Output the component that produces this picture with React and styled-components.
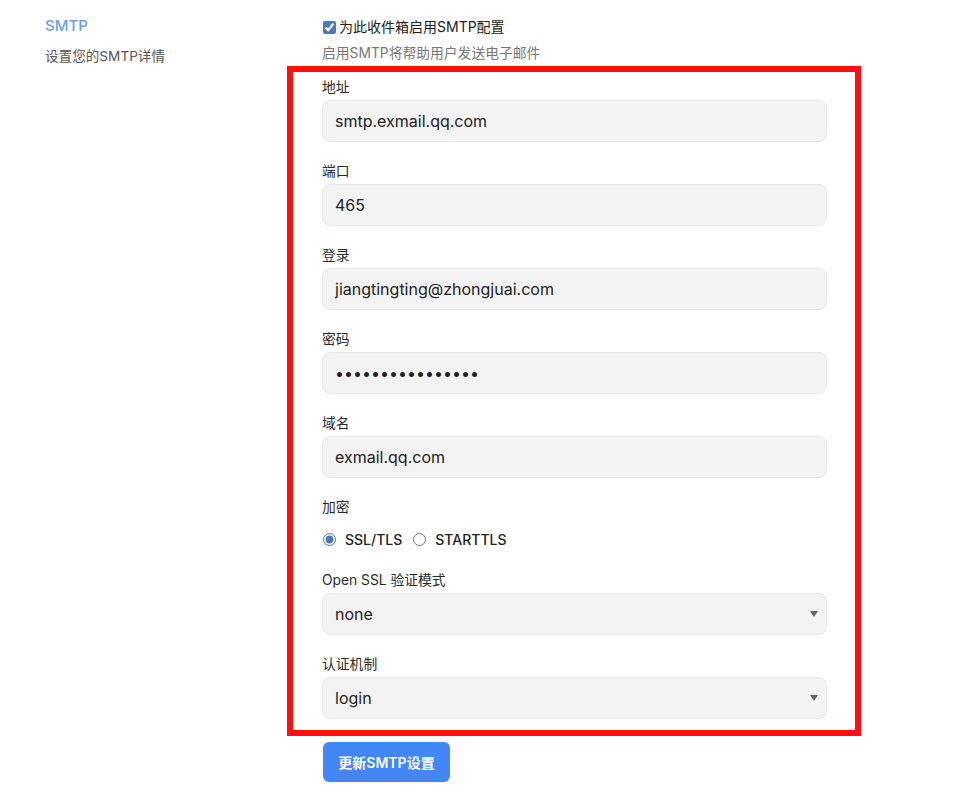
import React from "react";
import styled, { createGlobalStyle } from "styled-components";

const GlobalStyle = createGlobalStyle`
  html, body {
    margin: 0;
    background: #ffffff;
  }
  body {
    font-family: Inter, "Noto Sans CJK SC", sans-serif;
    color: #222;
  }
`;

const Page = styled.div`
  display: grid;
  grid-template-columns: 277px 505px;
  padding: 14px 0 0 45px;
`;

const Aside = styled.div`
  display: flex;
  flex-direction: column;
`;

const Title = styled.div`
  font-size: 15px;
  line-height: 24px;
  color: #6b9ef0;
  font-weight: 500;
`;

const Subtitle = styled.div`
  margin-top: 8px;
  font-size: 13.6px;
  line-height: 20px;
  color: #555;
`;

const Main = styled.div`
  display: flex;
  flex-direction: column;
`;

const CheckRow = styled.label`
  display: flex;
  align-items: center;
  gap: 3px;
  margin-top: 2px;
  font-size: 14px;
  line-height: 22px;
  color: #222;

  input {
    margin: 0 0 0 1px;
    width: 13px;
    height: 13px;
    accent-color: #4f79b0;
  }
`;

const Help = styled.div`
  margin-top: 6px;
  font-size: 13.8px;
  line-height: 18px;
  color: #777;
`;

const Frame = styled.div`
  display: flex;
  flex-direction: column;
  gap: 20px;
  margin: 4px -34px 0 -35px;
  padding: 6px 28px 11px 29px;
  border: 6px solid #ff1010;
`;

const Field = styled.div`
  display: flex;
  flex-direction: column;
`;

const Label = styled.div`
  font-size: 13.8px;
  line-height: 18px;
  color: #2a2a2a;
  margin-bottom: ${(p) => (p.$wide ? "13px" : "4px")};
`;

const Input = styled.input`
  box-sizing: border-box;
  width: 100%;
  height: 42px;
  padding: 0 12px;
  background: #f3f3f3;
  border: 1px solid #e8e8e8;
  border-radius: 8px;
  font-family: Inter, "Noto Sans CJK SC", sans-serif;
  font-size: 16px;
  color: #222;
  outline: none;
`;

const SelectWrap = styled.div`
  position: relative;

  &::after {
    content: "";
    position: absolute;
    right: 9px;
    top: 18px;
    border-left: 4px solid transparent;
    border-right: 4px solid transparent;
    border-top: 6px solid #666;
    pointer-events: none;
  }
`;

const Select = styled.select`
  box-sizing: border-box;
  width: 100%;
  height: 42px;
  padding: 0 12px;
  background: #f3f3f3;
  border: 1px solid #e8e8e8;
  border-radius: 8px;
  font-family: Inter, "Noto Sans CJK SC", sans-serif;
  font-size: 16px;
  color: #222;
  appearance: none;
  outline: none;
`;

const RadioRow = styled.div`
  display: flex;
  align-items: center;
  height: 20px;
  margin-bottom: 2px;
`;

const Radio = styled.label`
  display: flex;
  align-items: center;
  gap: 9px;
  margin-right: 10px;
  font-size: 14px;
  font-weight: 500;
  color: #222;

  input {
    margin: 0 0 0 1px;
    width: 13px;
    height: 13px;
    accent-color: #4f79b0;
  }
`;

const Button = styled.button`
  align-self: flex-start;
  margin: 6px 0 0 1px;
  width: 127px;
  height: 40px;
  border: none;
  border-radius: 6px;
  background: #4287f5;
  color: #fff;
  font-family: Inter, "Noto Sans CJK SC", sans-serif;
  font-size: 14px;
  font-weight: 600;
`;

const fields = [
  { label: "地址", value: "smtp.exmail.qq.com" },
  { label: "端口", value: "465" },
  { label: "登录", value: "jiangtingting@zhongjuai.com" },
  { label: "密码", value: "abcdefghijklmnop", type: "password" },
  { label: "域名", value: "exmail.qq.com" },
];

export default function App() {
  return (
    <>
      <GlobalStyle />
      <Page>
        <Aside>
          <Title>SMTP</Title>
          <Subtitle>设置您的SMTP详情</Subtitle>
        </Aside>
        <Main>
          <CheckRow>
            <input type="checkbox" defaultChecked />
            为此收件箱启用SMTP配置
          </CheckRow>
          <Help>启用SMTP将帮助用户发送电子邮件</Help>
          <Frame>
            {fields.map((f) => (
              <Field key={f.label}>
                <Label>{f.label}</Label>
                <Input type={f.type || "text"} defaultValue={f.value} />
              </Field>
            ))}
            <Field>
              <Label $wide>加密</Label>
              <RadioRow>
                <Radio>
                  <input type="radio" name="enc" defaultChecked />
                  SSL/TLS
                </Radio>
                <Radio>
                  <input type="radio" name="enc" />
                  STARTTLS
                </Radio>
              </RadioRow>
            </Field>
            <Field>
              <Label>Open SSL 验证模式</Label>
              <SelectWrap>
                <Select defaultValue="none">
                  <option value="none">none</option>
                  <option value="peer">peer</option>
                </Select>
              </SelectWrap>
            </Field>
            <Field>
              <Label>认证机制</Label>
              <SelectWrap>
                <Select defaultValue="login">
                  <option value="login">login</option>
                  <option value="plain">plain</option>
                </Select>
              </SelectWrap>
            </Field>
          </Frame>
          <Button>更新SMTP设置</Button>
        </Main>
      </Page>
    </>
  );
}
